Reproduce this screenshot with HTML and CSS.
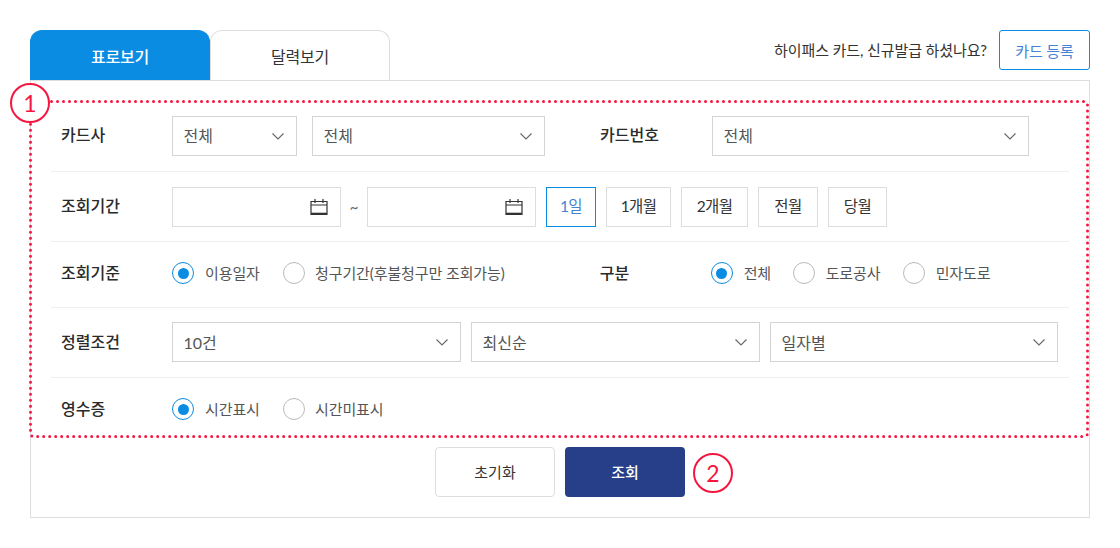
FILE: index.html
```html
<!DOCTYPE html>
<html lang="ko">
<head>
<meta charset="utf-8">
<title>표로보기</title>
<link rel="stylesheet" href="styles.css">
</head>
<body>
<svg class="defs" width="0" height="0" aria-hidden="true">
  <symbol id="chev" viewBox="0 0 12 7"><path d="M.5.5 6 6 11.500.5" fill="none" stroke="#666" stroke-width="1.100"/></symbol>
  <symbol id="cal" viewBox="0 0 18 18"><path d="M1 3.500h16v13H1zM1 7h16M5 1v4M13 1v4" fill="none" stroke="#333" stroke-width="1.200"/><path d="M1 15.500h16" stroke="#333" stroke-width="1.600"/></symbol>
</svg>
<main class="page">
  <div class="top">
    <div class="tabs">
      <div class="tab tab-on">표로보기</div>
      <div class="tab">달력보기</div>
    </div>
    <div class="notice">
      <span class="notice-text">하이패스 카드, 신규발급 하셨나요?</span>
      <button class="reg">카드 등록</button>
    </div>
  </div>
  <section class="panel">
    <div class="row row-1">
      <div class="label">카드사</div>
      <div class="sel w125"><span>전체</span><svg class="chev"><use href="#chev"/></svg></div>
      <div class="sel w233 ml15"><span>전체</span><svg class="chev"><use href="#chev"/></svg></div>
      <div class="label label-2">카드번호</div>
      <div class="sel w317"><span>전체</span><svg class="chev"><use href="#chev"/></svg></div>
    </div>
    <div class="row row-2">
      <div class="label">조회기간</div>
      <div class="date"><svg class="cal"><use href="#cal"/></svg></div>
      <span class="tilde">~</span>
      <div class="date"><svg class="cal"><use href="#cal"/></svg></div>
      <div class="periods">
        <button class="period w50 period-on">1일</button>
        <button class="period w65">1개월</button>
        <button class="period w67">2개월</button>
        <button class="period w60">전월</button>
        <button class="period w59">당월</button>
      </div>
    </div>
    <div class="row row-3">
      <div class="label label-low">조회기준</div>
      <label class="radio r111"><i class="dot dot-on"></i>이용일자</label>
      <label class="radio tight"><i class="dot"></i>청구기간(후불청구만 조회가능)</label>
      <div class="label label-low abs-2">구분</div>
      <label class="radio r82"><i class="dot dot-on"></i>전체</label>
      <label class="radio r110"><i class="dot"></i>도로공사</label>
      <label class="radio"><i class="dot"></i>민자도로</label>
    </div>
    <div class="row row-4">
      <div class="label label-low">정렬조건</div>
      <div class="sel sel-low w289"><span>10건</span><svg class="chev"><use href="#chev"/></svg></div>
      <div class="sel sel-low w289 ml10"><span>최신순</span><svg class="chev"><use href="#chev"/></svg></div>
      <div class="sel sel-low w288 ml10"><span>일자별</span><svg class="chev"><use href="#chev"/></svg></div>
    </div>
    <div class="row row-5">
      <div class="label label-low">영수증</div>
      <label class="radio r111"><i class="dot dot-on"></i>시간표시</label>
      <label class="radio tight"><i class="dot"></i>시간미표시</label>
    </div>
    <div class="actions">
      <button class="btn btn-reset">초기화</button>
      <button class="btn btn-go">조회</button>
    </div>
  </section>
  <svg class="dotted" width="1060" height="338" viewBox="0 0 1060 338" aria-hidden="true">
    <rect x="1.500" y="1.500" width="1057" height="335" rx="3"/>
  </svg>
  <div class="mark mark-1">1</div>
  <div class="mark mark-2">2</div>
</main>
</body>
</html>
```
FILE: styles.css
```css
* { box-sizing: border-box; }
html, body { margin: 0; padding: 0; background: #fff; }
body {
  font-family: Lato, "Noto Sans CJK KR", "Noto Sans", sans-serif;
  color: #333;
  font-size: 15px;
}
.defs { position: absolute; }
.page { position: relative; width: 1120px; height: 548px; padding: 30px 30px 0; }
button { font: inherit; background: #fff; cursor: pointer; padding: 0; }

.top { display: flex; justify-content: space-between; height: 50px; }
.tabs { display: flex; }
.tab {
  width: 180px; height: 50px;
  display: flex; align-items: center; justify-content: center;
  font-size: 16px; letter-spacing: -.2px;
  color: #333; background: #fff;
  border: 1px solid #ddd; border-bottom: 0;
  border-radius: 12px 12px 0 0;
}
.tab-on { background: #0b8ce3; border-color: #0b8ce3; color: #fff; font-weight: 500; }
.notice { display: flex; gap: 12px; height: 40px; align-items: center; }
.notice-text { font-size: 15px; letter-spacing: -.1px; color: #333; position: relative; top: -1px; }
.reg {
  width: 91px; height: 40px;
  border: 1px solid #0b8ce3; border-radius: 3px;
  color: #4583d6; font-size: 15px; letter-spacing: -.1px;
}

.panel { border: 1px solid #ddd; height: 438px; padding: 0 20px; }
.row { display: flex; align-items: center; border-bottom: 1px solid #eee; padding-left: 10px; }
.row-1 { padding-top: 35px; padding-bottom: 15px; }
.row-2 { padding-top: 15px; padding-bottom: 14px; }
.row-3 { padding-top: 20px; padding-bottom: 23px; }
.row-4 { padding-top: 14px; padding-bottom: 15px; }
.row-5 { padding-top: 20px; padding-bottom: 0; border-bottom: 0; }

.label { width: 111px; font-size: 16px; font-weight: 500; color: #2a2a2a; flex: none; line-height: 20px; padding-bottom: 2px; }
.label-low { padding-bottom: 0; }
.label-2 { margin-left: 55px; width: 112px; }
.abs-2 { margin-left: 95px; width: 111px; }

.sel {
  height: 40px; flex: none;
  display: flex; align-items: center; justify-content: space-between;
  border: 1px solid #d4d4d4;
  padding: 0 12px 2px 10.500px;
  font-size: 16px; color: #555;
}
.sel-low { padding-bottom: 0; }
.w125 { width: 125px; }
.w233 { width: 233px; }
.w317 { width: 317px; }
.w289 { width: 289px; }
.w288 { width: 288px; }
.ml15 { margin-left: 15px; }
.ml10 { margin-left: 10px; }
.chev { width: 12px; height: 7px; margin-top: 2px; }
.sel-low .chev { margin-top: 0; }

.date {
  width: 169px; height: 40px; flex: none;
  display: flex; align-items: center; justify-content: flex-end;
  border: 1px solid #ddd;
  padding-right: 12px;
}
.cal { width: 18px; height: 18px; }
.tilde { width: 26px; text-align: center; font-size: 15px; color: #666; }
.periods { display: flex; gap: 10px; margin-left: 10px; }
.period { height: 40px; border: 1px solid #ddd; font-size: 15.500px; color: #333; letter-spacing: -.6px; padding-bottom: 4px; }
.period-on { border-color: #0b8ce3; color: #4583d6; }
.w50 { width: 50px; }
.w65 { width: 65px; }
.w67 { width: 67px; }
.w60 { width: 60px; }
.w59 { width: 59px; }

.radio { display: flex; align-items: center; font-size: 15px; color: #555; letter-spacing: -.1px; line-height: 22px; flex: none; }
.r111 { width: 111px; }
.r82 { width: 82px; }
.r110 { width: 110px; }
.dot {
  width: 22px; height: 22px; border-radius: 50%;
  border: 1.500px solid #bbb; background: #fff;
  margin-right: 11px; flex: none;
  display: flex; align-items: center; justify-content: center;
}
.tight .dot { margin-right: 10px; }
.dot-on { border-color: #0b8ce3; }
.dot-on::after { content: ""; width: 11px; height: 11px; border-radius: 50%; background: #0b8ce3; }

.actions { display: flex; justify-content: center; gap: 10px; margin-top: 27px; }
.btn { width: 120px; height: 50px; border-radius: 4px; font-size: 15px; padding-bottom: 2px; }
.btn-reset { border: 1px solid #ddd; color: #333; }
.btn-go { border: 0; background: #263f88; color: #fff; font-weight: 500; }

.dotted { position: absolute; left: 29px; top: 100px; pointer-events: none; }
.dotted rect {
  fill: none; stroke: #f5163f; stroke-width: 3;
  stroke-linecap: round; stroke-dasharray: 0 6;
}
.mark {
  position: absolute; width: 40px; height: 40px; border-radius: 50%;
  border: 2.500px solid #f5163f; background: #fff; color: #f5163f;
  display: flex; align-items: center; justify-content: center;
  font-size: 23px; font-weight: 400;
}
.mark-1 { left: 10px; top: 83px; }
.mark-2 { left: 693px; top: 453px; }
```
